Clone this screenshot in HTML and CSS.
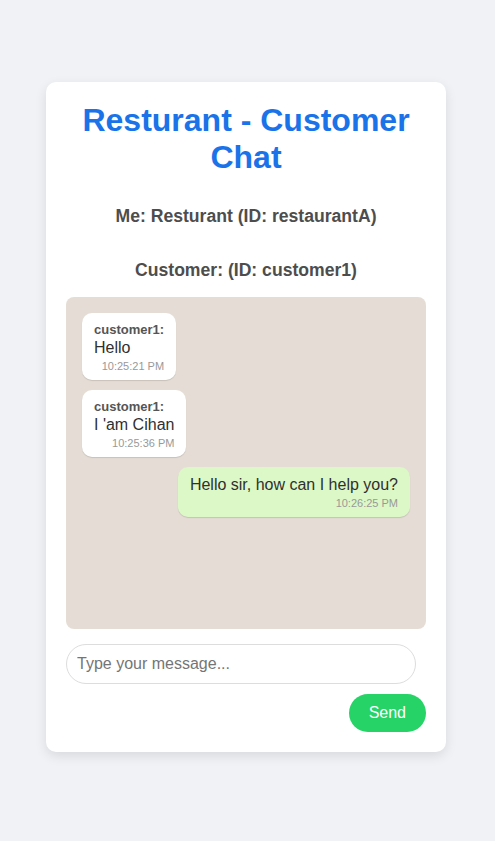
FILE: index.html
```html
<!DOCTYPE html>
<html lang="en">
<head>
<meta charset="utf-8">
<title>Resturant - Customer Chat</title>
<link rel="stylesheet" href="styles.css">
</head>
<body>
<div class="page">
  <div class="card">
    <h1 class="title">Resturant - Customer Chat</h1>
    <h3 class="info">Me: Resturant (ID: restaurantA)</h3>
    <h3 class="info info-second">Customer: (ID: customer1)</h3>
    <div class="chat">
      <div class="msg msg-in">
        <div class="sender">customer1:</div>
        <div class="text">Hello</div>
        <div class="time">10:25:21 PM</div>
      </div>
      <div class="msg msg-in">
        <div class="sender">customer1:</div>
        <div class="text">I 'am Cihan</div>
        <div class="time">10:25:36 PM</div>
      </div>
      <div class="msg msg-out">
        <div class="text">Hello sir, how can I help you?</div>
        <div class="time">10:26:25 PM</div>
      </div>
    </div>
    <input class="input" type="text" placeholder="Type your message...">
    <div class="actions">
      <button class="send">Send</button>
    </div>
  </div>
</div>
</body>
</html>
```
FILE: styles.css
```css
* { box-sizing: border-box; }
html, body {
  margin: 0;
  padding: 0;
  background: #f0f2f5;
  font-family: "Liberation Sans", Arial, sans-serif;
}
.page {
  display: flex;
  justify-content: center;
  align-items: flex-start;
  padding: 82px 3px 0 0;
  min-height: 841px;
}
.card {
  width: 400px;
  background: #ffffff;
  border-radius: 10px;
  padding: 20px;
  box-shadow: 0 4px 12px rgba(0, 0, 0, 0.1);
  display: flex;
  flex-direction: column;
}
.title {
  margin: 0;
  font-size: 32px;
  line-height: 36.8px;
  font-weight: bold;
  color: #1a73e8;
  text-align: center;
}
.info {
  margin: 30px 0 0;
  font-size: 17.6px;
  line-height: 20px;
  font-weight: bold;
  color: #4d4d4d;
  text-align: center;
}
.info-second {
  margin-top: 34px;
}
.chat {
  margin-top: 17px;
  height: 332px;
  background: #e5ddd5;
  border-radius: 8px;
  padding: 16px;
  display: flex;
  flex-direction: column;
  align-items: flex-start;
  gap: 10px;
}
.msg {
  border-radius: 10px;
  padding: 8px 12px 7px;
  box-shadow: 0 1px 1px rgba(0, 0, 0, 0.13);
  color: #303030;
}
.msg-in {
  background: #ffffff;
}
.msg-out {
  background: #dcf8c6;
  align-self: flex-end;
}
.sender {
  font-size: 13px;
  line-height: 17px;
  font-weight: bold;
  color: #555555;
}
.text {
  font-size: 16px;
  line-height: 19px;
}
.time {
  font-size: 11px;
  line-height: 14px;
  margin-top: 2px;
  color: #999999;
  text-align: right;
}
.input {
  margin-top: 15px;
  width: 350px;
  height: 40px;
  border: 1px solid #dddddd;
  border-radius: 20px;
  padding: 0 10px;
  font-size: 16px;
  font-family: "Liberation Sans", Arial, sans-serif;
  color: #333333;
  outline: none;
}
.input::placeholder {
  color: #757575;
}
.actions {
  margin-top: 10px;
  display: flex;
  justify-content: flex-end;
}
.send {
  height: 38px;
  padding: 0 20px;
  border: none;
  border-radius: 20px;
  background: #25d366;
  color: #ffffff;
  font-size: 16px;
  font-family: "Liberation Sans", Arial, sans-serif;
  cursor: pointer;
}
```
